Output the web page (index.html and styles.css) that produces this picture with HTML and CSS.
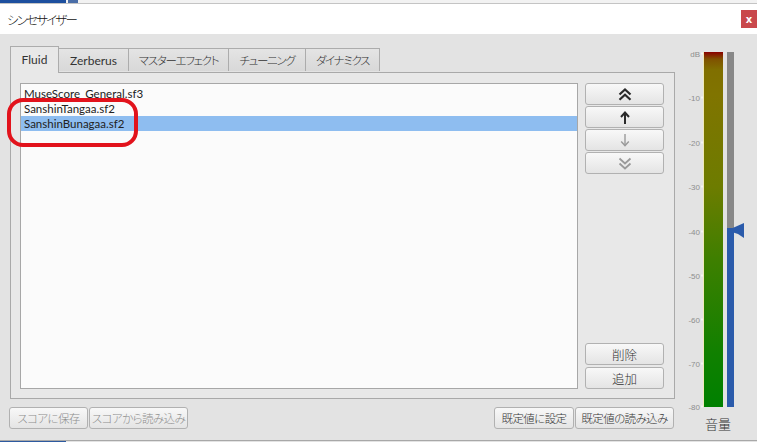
FILE: index.html
```html
<!DOCTYPE html>
<html lang="ja">
<head>
<meta charset="utf-8">
<title>シンセサイザー</title>
<link rel="stylesheet" href="styles.css">
</head>
<body>
<div class="window">
  <div class="topstrip"><span class="tb1"></span><span class="tb2"></span></div>
  <div class="titlebar">
    <span class="title">シンセサイザー</span>
    <span class="close">x</span>
  </div>
  <div class="main">
    <div class="leftcol">
      <div class="tabs">
        <div class="tab active t1">Fluid</div>
        <div class="tab t2">Zerberus</div>
        <div class="tab jp t3">マスターエフェクト</div>
        <div class="tab jp t4">チューニング</div>
        <div class="tab jp t5">ダイナミクス</div>
      </div>
      <div class="panel">
        <div class="list">
          <div class="item">MuseScore_General.sf3</div>
          <div class="item">SanshinTangaa.sf2</div>
          <div class="item selected">SanshinBunagaa.sf2</div>
        </div>
        <div class="sidebtns">
          <div class="group">
            <div class="btn">
              <svg width="14" height="13" viewBox="0 0 14 13"><polyline points="1.5,6.5 7,1.5 12.5,6.5" fill="none" stroke="#2a2a2a" stroke-width="2.2"/><polyline points="1.5,11.8 7,6.8 12.5,11.8" fill="none" stroke="#2a2a2a" stroke-width="2.2"/></svg>
            </div>
            <div class="btn">
              <svg width="10" height="13" viewBox="0 0 10 13"><line x1="5" y1="2" x2="5" y2="13" stroke="#2a2a2a" stroke-width="2"/><polyline points="1,6 5,1.6 9,6" fill="none" stroke="#2a2a2a" stroke-width="2"/></svg>
            </div>
            <div class="btn">
              <svg width="10" height="13" viewBox="0 0 10 13"><line x1="5" y1="0" x2="5" y2="11.5" stroke="#9a9a9a" stroke-width="1.4"/><polyline points="1.2,7.5 5,11.6 8.8,7.5" fill="none" stroke="#9a9a9a" stroke-width="1.4"/></svg>
            </div>
            <div class="btn">
              <svg width="14" height="13" viewBox="0 0 14 13"><polyline points="1.5,1.5 7,6.5 12.5,1.5" fill="none" stroke="#9a9a9a" stroke-width="1.8"/><polyline points="1.5,6.5 7,11.5 12.5,6.5" fill="none" stroke="#9a9a9a" stroke-width="1.8"/></svg>
            </div>
          </div>
          <div class="group gap2">
            <div class="btn txt">削除</div>
            <div class="btn txt">追加</div>
          </div>
        </div>
      </div>
      <div class="bottomrow">
        <div class="bgroup">
          <div class="btn txt small disabled w79">スコアに保存</div>
          <div class="btn txt small disabled w99">スコアから読み込み</div>
        </div>
        <div class="bgroup">
          <div class="btn txt small w80">既定値に設定</div>
          <div class="btn txt small w99">既定値の読み込み</div>
        </div>
      </div>
      <div class="annot"></div>
    </div>
    <div class="meter">
      <div class="meterrow">
        <div class="scale">
          <span class="lbl" style="top:2px">dB</span>
          <span class="lbl" style="top:46px">-10</span>
          <span class="lbl" style="top:91px">-20</span>
          <span class="lbl" style="top:135px">-30</span>
          <span class="lbl" style="top:180px">-40</span>
          <span class="lbl" style="top:224px">-50</span>
          <span class="lbl" style="top:268px">-60</span>
          <span class="lbl" style="top:312px">-70</span>
          <span class="lbl" style="top:355px">-80</span>
        </div>
        <div class="level"></div>
        <div class="slider">
          <div class="sgray"></div>
          <div class="sblue"></div>
          <svg class="pointer" width="18" height="15" viewBox="0 0 18 15"><polygon points="0,7.5 17,0 17,15 11,11" fill="#2b5bab"/></svg>
        </div>
      </div>
      <div class="vol">音量</div>
    </div>
  </div>
  <div class="bottomstrip"><span class="bb"></span></div>
</div>
</body>
</html>
```

FILE: styles.css
```css
* { box-sizing: border-box; }
html, body { margin: 0; padding: 0; }
body {
  width: 757px;
  height: 442px;
  overflow: hidden;
  background: #e3e3e3;
  font-family: "Lato", "Noto Sans CJK JP", sans-serif;
  font-feature-settings: "palt";
  font-size: 12px;
  color: #222;
}
.window { width: 757px; height: 442px; display: flex; flex-direction: column; }
.topstrip {
  height: 4px;
  background: #f2f2f2;
  border-bottom: 1px solid #c4c4c4;
  display: flex;
}
.tb1 { width: 66px; height: 3px; background: #1d4f9e; }
.tb2 { width: 10px; height: 3px; background: #4a6ea8; margin-left: 2px; }
.titlebar {
  height: 30px;
  background: #ffffff;
  display: flex;
  justify-content: space-between;
  align-items: center;
  padding-left: 7px;
}
.title { font-size: 12.5px; letter-spacing: -1.8px; color: #111; font-weight: 300; }
.close {
  width: 16px;
  height: 18px;
  background: #c9484c;
  color: #fff;
  font-family: "DejaVu Sans", sans-serif;
  font-weight: bold;
  font-size: 10px;
  display: flex;
  align-items: center;
  justify-content: center;
}
.main { height: 406px; display: flex; }
.leftcol {
  width: 680px;
  padding: 11px 0 0 10px;
  position: relative;
}
.tabs { display: flex; align-items: flex-end; height: 27px; position: relative; z-index: 1; }
.tab {
  height: 23px;
  border: 1px solid #acacac;
  border-left: none;
  border-bottom: none;
  background: linear-gradient(#e4e4e4, #d8d8d8);
  display: flex;
  align-items: center;
  justify-content: center;
  color: #333;
  font-size: 12px;
  margin-bottom: 1px;
}
.tab.jp { font-size: 11.5px; letter-spacing: -1.3px; font-weight: 300; }
.tab.active {
  height: 27px;
  border-left: 1px solid #acacac;
  background: #e8e8e8;
  margin-bottom: -1px;
  padding-bottom: 2px;
}
.t1 { width: 49px; }
.t2 { width: 70px; }
.t3 { width: 100px; }
.t4 { width: 77px; }
.t5 { width: 74px; }
.panel {
  width: 665px;
  height: 327px;
  border: 1px solid #a9a9a9;
  background: #e8e8e8;
  display: flex;
  gap: 7px;
  padding: 10px 10px 9px 9px;
}
.list {
  flex: 1;
  border: 1px solid #a7a7a7;
  background: #fbfbfb;
  padding-top: 2px;
  overflow: hidden;
}
.item {
  height: 15px;
  line-height: 15px;
  padding-left: 3px;
  font-size: 11.5px;
  color: #222;
  white-space: nowrap;
}
.item.selected { background: #8ebdf0; }
.sidebtns {
  width: 79px;
  display: flex;
  flex-direction: column;
  justify-content: space-between;
}
.group { display: flex; flex-direction: column; gap: 1px; }
.gap2 { gap: 2px; }
.btn {
  height: 22px;
  border: 1px solid #b1b1b1;
  border-radius: 3px;
  background: linear-gradient(#f8f8f8, #e4e4e4);
  display: flex;
  align-items: center;
  justify-content: center;
}
.btn.txt { font-size: 12.5px; color: #333; white-space: nowrap; font-weight: 300; }
.btn.small { font-size: 11.5px; letter-spacing: -0.6px; }
.btn.disabled { color: #8d8d8d; }
.w79 { width: 79px; }
.w80 { width: 80px; }
.w99 { width: 99px; }
.bottomrow {
  display: flex;
  justify-content: space-between;
  margin-top: 8px;
  margin-left: -1px;
  width: 665px;
}
.bgroup { display: flex; gap: 1px; }
.annot {
  position: absolute;
  left: 7px;
  top: 64px;
  width: 131px;
  height: 49px;
  border: 4px solid #e2131c;
  border-radius: 16px;
}
.meter { flex: 1; display: flex; flex-direction: column; padding-top: 18px; }
.meterrow { display: flex; height: 355px; }
.scale { width: 23px; position: relative; }
.lbl {
  position: absolute;
  right: 0;
  transform: translateY(-50%);
  font-family: "Liberation Sans", sans-serif;
  font-size: 8px;
  color: #8e8e8e;
  padding-right: 3px;
  line-height: 9px;
}
.lbl::after {
  content: "";
  position: absolute;
  right: 0;
  top: 3px;
  width: 2px;
  height: 2px;
  background: #f4f4f4;
}
.level {
  width: 20px;
  border-left: 1px solid #efe9b8;
  background: linear-gradient(#8a0000 0%, #7f5200 2%, #806f00 5%, #807400 12%, #6d7c00 38%, #3f7f00 58%, #108000 85%, #008000 100%);
}
.slider { width: 7px; margin-left: 4px; position: relative; display: flex; flex-direction: column; }
.sgray { height: 176px; background: #888888; }
.sblue { flex: 1; background: #2b5bab; }
.pointer { position: absolute; left: 0; top: 171px; }
.vol { font-size: 13px; color: #333; padding-left: 25px; margin-top: 7px; font-weight: 300; }
.bottomstrip { height: 2px; border-top: 1px solid #a8a8a8; display: flex; }
.bb { width: 66px; height: 1px; background: #2d5aa0; }
```
